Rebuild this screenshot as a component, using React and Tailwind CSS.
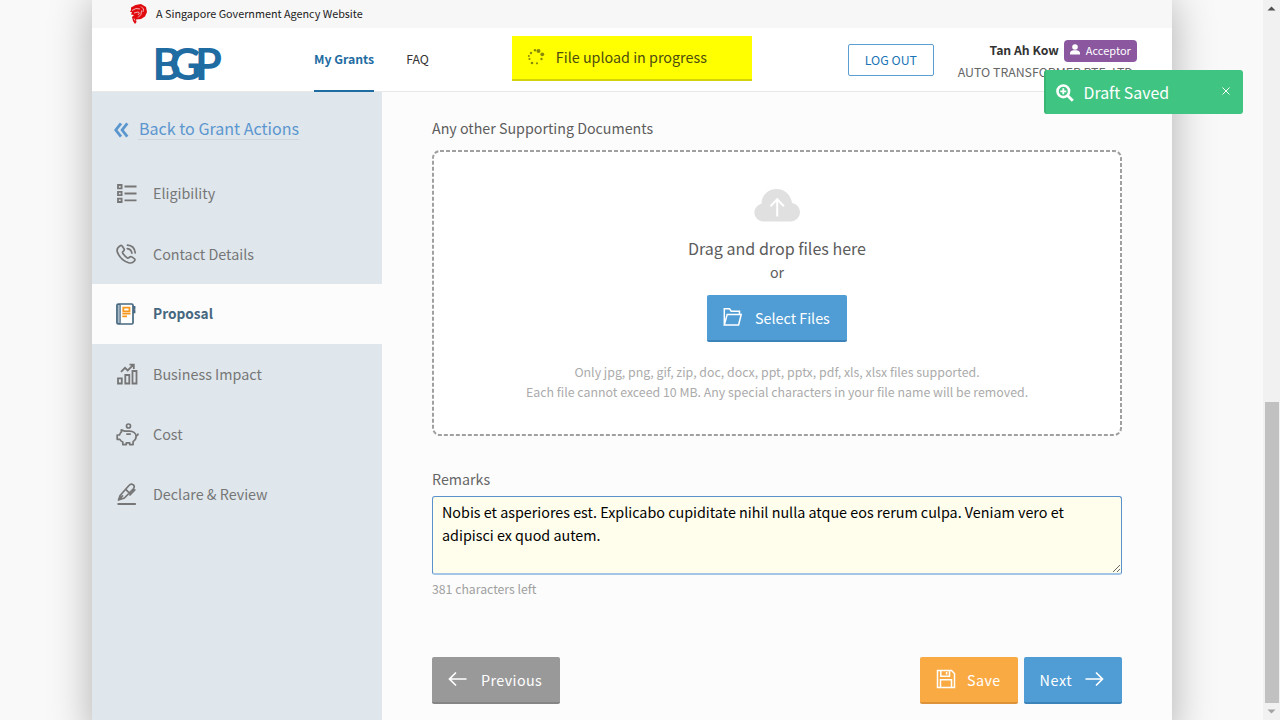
const iconBase = { fill: "none", stroke: "currentColor" };

function ListIcon() {
  return (
    <svg width="21" height="21" viewBox="0 0 21 21" {...iconBase} strokeWidth="1.8">
      <path d="M2 2h3.600v3.400H2zM2 8.800h3.600v3.400H2zM2 15.600h3.600v3.400H2zM8.500 3.500h12M8.500 10.500h12M8.500 17.300h12" />
    </svg>
  );
}

function PhoneIcon() {
  return (
    <svg width="21" height="21" viewBox="0 0 21 21" {...iconBase} strokeWidth="1.700" strokeLinejoin="round" strokeLinecap="round">
      <path d="M4.200 1.800c.8-.6 1.600-.3 2.100.4l1.700 2.500c.5.800.3 1.500-.3 2.100l-1 1c-.3.500-.2.900.1 1.400 1.200 1.900 2.600 3.400 4.500 4.700.5.300 1 .3 1.400 0l1-.9c.7-.5 1.300-.6 2.100-.1l2.500 1.700c.8.600.9 1.400.3 2.100-1.500 1.900-3.600 2.800-6 2C7.600 17.200 3.200 12.800 1.300 7.900.6 5.500 2 3.200 4.200 1.800z" />
      <path d="M11.300 4.600c2.700.3 4.200 1.900 4.600 4.500M11.500 1.200c4.300.3 7.200 3.100 7.700 7.600" />
    </svg>
  );
}

function BookIcon() {
  return (
    <svg width="20" height="22" viewBox="0 0 20 22" fill="none">
      <path d="M16.500 3.800h2.200v2h-2.200M16.500 7.500h2.200v2h-2.200" stroke="#46677f" strokeWidth="1.400" />
      <rect x="1" y="1" width="16" height="20" rx="1.300" fill="#fff" stroke="#46677f" strokeWidth="1.700" />
      <path d="M1.200 1.500h3v19h-3z" fill="#a9b9c6" stroke="#46677f" strokeWidth="1" />
      <path d="M7.300 4.700h6.200v3.600H7.300z" stroke="#f7981d" strokeWidth="1.800" fill="#fff" />
      <path d="M6.300 10.700h8.200M6.300 13.400h4.700" stroke="#f7981d" strokeWidth="1.700" />
    </svg>
  );
}

function ChartIcon() {
  return (
    <svg width="22" height="22" viewBox="0 0 22 22" {...iconBase} strokeWidth="1.800">
      <path d="M2 15.300h3.800v5.200H2zM9.300 12h4v8.500h-4zM16.500 8h4v12.500h-4z" />
      <path d="M5 8.800l4-4 2.700 2.700L17.300 1.900M13.500 1.600h4.300v4.300" />
    </svg>
  );
}

function PiggyIcon() {
  return (
    <svg width="23" height="23" viewBox="0 0 23 23" {...iconBase} strokeWidth="1.700" strokeLinejoin="round">
      <circle cx="12.500" cy="3" r="2" />
      <path d="M5.300 6.800v2.400c-.9.800-1.500 1.700-1.800 2.800H1.200v4.300h2.600c.7 1.300 1.700 2.200 3 2.800v2.500h3.500v-1.700h3.400v1.700h3.400v-3c1.900-1.200 3-2.900 3-5 0-3.400-2.700-5.500-6.600-5.500H8.600z" />
      <path d="M10.300 11.200h4.500M20 12.800c1.300-.1 2-.9 2-2.300" />
    </svg>
  );
}

function PenIcon() {
  return (
    <svg width="21" height="22" viewBox="0 0 21 22" {...iconBase} strokeWidth="1.700" strokeLinejoin="round" strokeLinecap="round">
      <path d="M2.200 21h17" strokeWidth="1.800" />
      <path d="M2.500 17l1.600-4.500L12.500 3c1.500-1.700 3.400-2.200 4.700-1.200 1.400 1 1.300 2.600.2 4L8.400 15zM2.500 17l4-4.200M9.700 6.400l4 4M14 12l4.800-5.200" />
    </svg>
  );
}

function FolderIcon() {
  return (
    <svg width="20" height="20" viewBox="0 0 20 20" {...iconBase} strokeWidth="1.500">
      <path d="M1.300 18V1.800h5.200l1.700 2.400h8.300v3M1.300 18L4.200 7.400h14L15.600 18z" />
    </svg>
  );
}

function SaveIcon() {
  return (
    <svg width="20" height="20" viewBox="0 0 20 20" {...iconBase} strokeWidth="1.500">
      <path d="M1.500 1.500h14l3 3v14h-17zM4.800 1.500v5.700h8.700V1.500M10.600 3v2.500M4.500 18.500v-7.700h11v7.700" />
    </svg>
  );
}

function ArrowIcon({ className }) {
  return (
    <svg width="19" height="16" viewBox="0 0 19 16" {...iconBase} strokeWidth="1.700" className={className}>
      <path d="M.5 8h17.300M11 1.500L17.500 8 11 14.500" />
    </svg>
  );
}

function LionIcon() {
  return (
    <svg width="17" height="20" viewBox="0 0 17 20" className="-mt-px">
      <path d="M1 3.500L5.500 1 11 0l5 3 1 5-2 4.500-4 2.500-5 .5.500 2.500-1.500 2L3 17l-1-4 2-2-3-.5 1-2.500H0l1-2z" fill="#e00a0f" />
      <path d="M2 6.500l4-2 4 .5M4 9l4-1 1.500 1L8 11M11 2.500l2.500 2.500-.5 3M11.500 6.500l-.5 4-3 3M4 14.500l1 2" stroke="#f7f7f7" strokeWidth=".7" fill="none" />
    </svg>
  );
}

function Spinner() {
  const dots = [
    [8, 2.200, 1.200], [11.500, 3, 2], [15.300, 6.300, 1.900], [14.500, 11, 1.200],
    [10, 15.300, 1.100], [5, 15, 1.300], [2.500, 11, 1.100], [1.800, 8, 1], [4, 5, 1.200],
  ];
  return (
    <svg width="18" height="18" viewBox="0 0 18 18" fill="#8a8a0a" className="-mt-0.5">
      {dots.map(([x, y, r]) => <circle key={`${x}-${y}`} cx={x} cy={y} r={r} />)}
    </svg>
  );
}

const navItems = [
  { label: "Eligibility", Icon: ListIcon, box: "h-[61px]", text: "-mt-0.5" },
  { label: "Contact Details", Icon: PhoneIcon, box: "h-[60px]", text: "" },
  { label: "Proposal", Icon: BookIcon, box: "h-[60px]", text: "-mt-0.5 text-[13.700px]", active: true },
  { label: "Business Impact", Icon: ChartIcon, box: "h-[60px]", text: "" },
  { label: "Cost", Icon: PiggyIcon, box: "h-[60px]", text: "" },
  { label: "Declare & Review", Icon: PenIcon, box: "h-[60px]", text: "" },
];

function Sidebar() {
  return (
    <aside className="w-[290px] shrink-0 bg-[#dfe6ec]">
      <a className="flex h-[71px] pl-[22px] pt-[26px] text-[#5b96cf]">
        <svg width="15" height="16" viewBox="0 0 15 16" fill="none" stroke="currentColor" strokeWidth="2.800" className="mt-1">
          <path d="M7 1.300L1.800 8 7 14.700M13.300 1.300L8.100 8l5.200 6.700" />
        </svg>
        <span className="ml-[9px] h-[22px] border-b border-[#d0d6dc] pl-px text-[16.070px] leading-[21px]">Back to Grant Actions</span>
      </a>
      <nav>
        {navItems.map(({ label, Icon, box, text, active }) => (
          <a
            key={label}
            className={`flex items-center pl-6 text-[14.330px] ${box} ${active ? "bg-[#fcfcfc] font-bold text-[#46677f]" : "text-[#767676]"}`}
          >
            <span className="flex w-[37px] shrink-0">
              <Icon />
            </span>
            <span className={text}>{label}</span>
          </a>
        ))}
      </nav>
    </aside>
  );
}

function Header() {
  return (
    <header className="shrink-0">
      <div className="flex h-7 items-center bg-[#f7f7f7] pl-[38px] text-[10.800px] text-[#222]">
        <LionIcon />
        <span className="-mt-[3px] ml-[9px] leading-4">A Singapore Government Agency Website</span>
      </div>
      <div className="flex h-16 border-b border-[#e9e9e9] bg-white">
        <svg width="72" height="60" viewBox="0 0 72 60" className="ml-[60px] w-[72px] shrink-0" fill="#1f6ca3">
          <text y="52" fontSize="43.500" fontFamily="Lato" fontWeight="700" x="0.500 17.500 43">BGP</text>
        </svg>
        <nav className="ml-[90px] flex gap-8 text-[12.250px] leading-[63px]">
          <a className="h-16 border-b-2 border-[#1f6ca3] font-bold text-[#1f6ca3]">My Grants</a>
          <a className="text-[#333]">FAQ</a>
        </nav>
        <div className="ml-[83px] mt-2 flex h-[45px] w-60 shrink-0 items-center border-b-2 border-[#d3d30c] bg-[#ffff00] pl-[15px] text-[14.330px] text-[#4c4c10]">
          <Spinner />
          <span className="-mt-0.5 ml-[11px]">File upload in progress</span>
        </div>
        <button className="ml-24 mt-4 h-8 w-[86px] shrink-0 rounded-[2px] border border-[#5b9fd2] text-[12.350px] text-[#1b74b5]">LOG OUT</button>
        <div className="ml-6 mt-[11px] w-[180px] shrink-0">
          <div className="flex h-[23px] items-center justify-end pr-[1px]">
            <span className="mr-[5px] text-[12.250px] font-bold text-[#333]">Tan Ah Kow</span>
            <span className="flex h-[22px] w-[73px] items-center rounded-[4px] bg-[#8b58a0] pl-1.5 text-[11px] text-white">
              <svg width="10" height="11" viewBox="0 0 10 11" fill="currentColor" className="mb-0.5 mr-[6px]">
                <circle cx="5" cy="3" r="2.800" />
                <path d="M0 10.500V9c0-1.700 2-2.600 3.500-2.800h3C8 6.400 10 7.300 10 9v1.500z" />
              </svg>
              Acceptor
            </span>
          </div>
          <div className="whitespace-nowrap text-[12.350px] leading-[21px] text-[#666]">AUTO TRANSFORMER PTE. LTD.</div>
        </div>
      </div>
    </header>
  );
}

const button = "flex h-[47.500px] items-center rounded-[2px] border-b-2 pl-4 pr-4 text-[14.330px] text-white";

function Content() {
  return (
    <main className="w-[790px] bg-[#fcfcfc] px-[50px] pt-[25px]">
      <h3 className="h-[33px] text-[14.250px] leading-[21px] text-[#5c5c5c]">Any other Supporting Documents</h3>
      <div className="relative flex h-[286px] flex-col items-center rounded-[8px] bg-white pt-[39px]">
        <svg width="690" height="286" className="absolute inset-0" fill="none" stroke="#a0a0a0" strokeWidth="2" strokeDasharray="4 2">
          <rect x="1" y="1" width="688" height="284" rx="7" />
        </svg>
        <svg width="46" height="33" viewBox="0 0 46 33" fill="#e0e0e0" className="mr-px">
          <path d="M9 32.500a9 9 0 0 1-1.500-17.800C7.500 6.500 14 0 22.500 0 30.500 0 37 6 38 14a9.300 9.300 0 0 1-1 18.500z" />
          <path d="M23.200 27.500V10.500M16.500 17.200l6.700-7 6.700 7" fill="none" stroke="#fff" strokeWidth="2" />
        </svg>
        <p className="mt-[14px] text-[16.070px] leading-6 text-[#5c5c5c]">Drag and drop files here</p>
        <p className="text-[14.250px] leading-6 text-[#5c5c5c]">or</p>
        <button className={`${button} mt-[10.500px] w-[140px] border-[#3b83b9] bg-[#509dd5]`}>
          <FolderIcon />
          <span className="ml-3">Select Files</span>
        </button>
        <p className="mt-5 text-center text-[12.370px] leading-5 text-[#ababab]">
          Only jpg, png, gif, zip, doc, docx, ppt, pptx, pdf, xls, xlsx files supported.
          <br />
          Each file cannot exceed 10 MB. Any special characters in your file name will be removed.
        </p>
      </div>
      <label className="mt-8 block h-7 text-[14.250px] leading-[21px] text-[#666]">Remarks</label>
      <textarea
        className="block h-[79px] w-[690px] rounded-[3px] border border-b-2 border-[#5a90cc] border-b-[#a4c5e6] bg-[#fffdec] px-[9px] py-[3px] text-[14.330px] leading-[23px] text-black"
        defaultValue="Nobis et asperiores est. Explicabo cupiditate nihil nulla atque eos rerum culpa. Veniam vero et adipisci ex quod autem."
      />
      <p className="mt-1 text-[12.250px] leading-5 text-[#a0a0a0]">381 characters left</p>
      <div className="mt-[57.500px] flex">
        <button className={`${button} w-32 border-[#858585] bg-[#999999] tracking-[.4px]`}>
          <ArrowIcon className="rotate-180" />
          <span className="ml-[14px]">Previous</span>
        </button>
        <button className={`${button} ml-auto w-[98px] border-[#dc933a] bg-[#faaa43] tracking-[.4px]`}>
          <SaveIcon />
          <span className="ml-[11px]">Save</span>
        </button>
        <button className={`${button} ml-[5.500px] w-[98.500px] border-[#3b83b9] bg-[#509dd5] tracking-[.6px]`}>
          <span className="mr-[13px]">Next</span>
          <ArrowIcon />
        </button>
      </div>
    </main>
  );
}

function Toast() {
  return (
    <div className="absolute left-[1043.500px] top-[70px] flex h-11 w-[199.500px] items-center rounded-[3px] border-l-2 border-[#38b673] bg-[#40c482] pl-[10px] text-[15.900px] text-white">
      <svg width="18" height="18" viewBox="0 0 18 18" {...iconBase} className="mt-0.5">
        <circle cx="7.300" cy="7.300" r="5.800" strokeWidth="2.600" />
        <path d="M11.500 11.500l5.300 5.300" strokeWidth="2.800" />
        <path d="M7.300 4.300v6M4.300 7.300h6" strokeWidth="1.800" />
      </svg>
      <span className="ml-[10px] mt-0.5">Draft Saved</span>
      <svg width="8" height="8" viewBox="0 0 8 8" {...iconBase} strokeWidth="1" className="mb-0.5 ml-auto mr-[13px]">
        <path d="M.5.5l7 7M7.500.5l-7 7" />
      </svg>
    </div>
  );
}

function Scrollbar() {
  return (
    <div className="relative flex w-[17px] flex-col items-center bg-[#f1f1f1]">
      <svg width="17" height="17" viewBox="0 0 17 17" fill="#505050">
        <path d="M4.500 10.500L8.500 6.500l4 4z" />
      </svg>
      <div className="mt-[385px] h-[301px] w-[14px] bg-[#c1c1c1]" />
      <svg width="17" height="17" viewBox="0 0 17 17" fill="#a3a3a3">
        <path d="M4.500 6.500h8l-4 4z" />
      </svg>
    </div>
  );
}

export default function App() {
  return (
    <div className="relative flex h-[720px] w-[1280px] overflow-hidden bg-[#f9f9f9] font-['Noto_Sans_CJK_SC',sans-serif]">
      <div className="ml-[92px] flex h-[740px] w-[1080px] shrink-0 flex-col shadow-[0_0_40px_rgba(0,0,0,0.3)]">
        <Header />
        <div className="flex flex-1">
          <Sidebar />
          <Content />
        </div>
      </div>
      <div className="ml-auto flex shrink-0">
        <Scrollbar />
      </div>
      <Toast />
    </div>
  );
}
